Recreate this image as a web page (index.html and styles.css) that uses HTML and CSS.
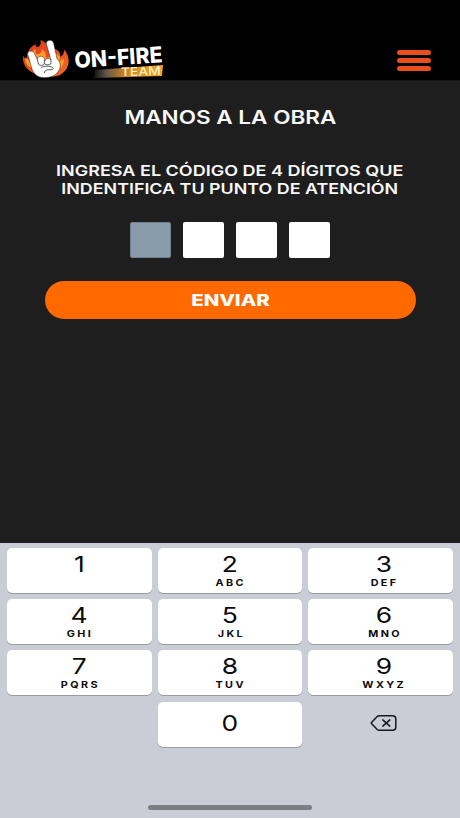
FILE: index.html
```html
<!DOCTYPE html>
<html lang="es">
<head>
<meta charset="utf-8">
<meta name="viewport" content="width=device-width, initial-scale=1">
<title>On-Fire Team</title>
<link rel="stylesheet" href="styles.css">
</head>
<body>
<header class="topbar">
  <svg class="logo" viewBox="0 0 146 46" role="img" aria-label="On-Fire Team">
    <defs>
      <linearGradient id="band" x1="0" x2="1" y1="0" y2="0">
        <stop offset="0" stop-color="#111"/>
        <stop offset=".18" stop-color="#64564d"/>
        <stop offset=".45" stop-color="#cf8420"/>
        <stop offset="1" stop-color="#f6a71c"/>
      </linearGradient>
      <linearGradient id="fire" x1="0" x2="1" y1="0" y2="1">
        <stop offset="0" stop-color="#d9371b"/>
        <stop offset="1" stop-color="#f46a25"/>
      </linearGradient>
    </defs>
    <g transform="translate(0 2) scale(.3333)">
      <path fill="url(#fire)" d="M38 106C14 97 1 79 3 53c4 7 7 10 11 12 0-25 11-39 27-46 0 7 4 10 9 7 8-7 8-13 4-19 17 4 29 15 27 31l20-5c11 6 15 14 14 24l9-8 3-14c22 27 15 60-12 75-20 9-51 9-77-4z"/>
      <path fill="#ff9a2c" d="M24 88C12 80 8 66 10 58l13 12c-1-20 7-31 18-37-3 12 2 18 10 15 7-4 9-9 8-16 10 7 14 16 12 29l34-14 9 9-2 14 14-8c0 20-10 32-24 38z"/>
      <path fill="#fff" stroke="#171717" stroke-width="1.5" stroke-linejoin="round" d="M17 49c-2-11 17-14 20-3l9 19c0-11 17-14 21-3l2 6c3-8 14-9 18-2L73 18c-2-13 18-16 22-3l10 47c9 8 12 19 8 30-7 19-25 27-46 27-22 0-35-14-39-33z"/>
      <path fill="none" stroke="#444" stroke-width="2.6" stroke-linecap="round" d="M46 66l4 13c4 5 14 4 17-1V67M68 78c5 4 14 3 19-1V66M58 88c9-4 21-5 31-1 8 3 6 8-2 8l-11 1c-6 2-9 4-9 8"/>
    </g>
    <path fill="url(#band)" d="M73 34l68-5-1 11-68 2z"/>
    <text class="brand" transform="translate(53 32) rotate(-3.8)" textLength="88" lengthAdjust="spacingAndGlyphs">ON-FIRE</text>
    <text class="brand-team" transform="translate(99 40.3) rotate(-2)" textLength="40" lengthAdjust="spacingAndGlyphs">TEAM</text>
  </svg>
  <button class="menu" aria-label="Menú"><i></i><i></i><i></i></button>
</header>
<main class="content">
  <h1 class="title"><span class="wide">MANOS A LA OBRA</span></h1>
  <p class="hint"><span class="wide">INGRESA EL CÓDIGO DE 4 DÍGITOS QUE</span><span class="wide second">INDENTIFICA TU PUNTO DE ATENCIÓN</span></p>
  <div class="code"><span class="cell active"></span><span class="cell"></span><span class="cell"></span><span class="cell"></span></div>
  <button class="send"><span class="wide">ENVIAR</span></button>
</main>
<section class="keyboard">
  <div class="keys">
    <div class="key"><b>1</b></div>
    <div class="key"><b>2</b><small>ABC</small></div>
    <div class="key right"><b>3</b><small>DEF</small></div>
    <div class="key"><b>4</b><small>GHI</small></div>
    <div class="key"><b>5</b><small>JKL</small></div>
    <div class="key right"><b>6</b><small>MNO</small></div>
    <div class="key"><b>7</b><small>PQRS</small></div>
    <div class="key"><b>8</b><small>TUV</small></div>
    <div class="key right"><b>9</b><small>WXYZ</small></div>
    <div></div>
    <div class="key zero"><b>0</b></div>
    <div class="erase">
      <svg width="28" height="18" viewBox="0 0 28 18" fill="none" stroke="#17181b" stroke-width="1.5" stroke-linecap="round" stroke-linejoin="round"><path d="M9.2 1.7h13.3q3.3 0 3.3 3v8.6q0 3-3.3 3H9.2q-1 0-2-.8L1.7 9.8q-.8-.8 0-1.6l5.5-5.7q1-.8 2-.8zM12.8 5.9l7 6.2m0-6.2l-7 6.2"/></svg>
    </div>
  </div>
  <div class="home"></div>
</section>
</body>
</html>
```
FILE: styles.css
```css
* { box-sizing: border-box; }
body {
  margin: 0;
  width: 460px;
  height: 818px;
  display: flex;
  flex-direction: column;
  overflow: hidden;
  background: #1e1e1e;
  font-family: Inter, "Liberation Sans", sans-serif;
}
button { border: 0; padding: 0; font: inherit; }
.topbar {
  height: 81px;
  padding: 36px 29px 0 22px;
  display: flex;
  justify-content: space-between;
  align-items: flex-start;
  background: #000;
  border-bottom: 1px solid #151515;
}
.logo { width: 146px; height: 46px; overflow: visible; }
.brand { font: 800 22px Inter, sans-serif; fill: #fff; }
.brand-team { font: 500 12px Inter, sans-serif; fill: #fff0c8; }
.menu {
  width: 34px;
  margin-top: 14px;
  display: flex;
  flex-direction: column;
  gap: 3px;
  background: none;
}
.menu i { height: 5px; border-radius: 2.5px; background: #e94e1b; }
.content {
  height: 462px;
  display: flex;
  flex-direction: column;
  align-items: center;
  color: #f7f7f7;
}
.wide { display: block; white-space: nowrap; transform: scaleX(1.2); }
.title { margin: 25px 0 0; font-size: 19px; font-weight: 600; line-height: 24px; }
.title .wide { transform: scaleX(1.185); }
.hint {
  margin: 32px 0 0;
  font-size: 15px;
  font-weight: 600;
  line-height: 17.5px;
  text-align: center;
}
.hint .second { transform: scaleX(1.192); }
.code { display: flex; gap: 12px; margin-top: 25px; }
.cell { width: 41px; height: 36px; border-radius: 2px; background: #fff; }
.active { background: #889cab; border: 1px solid #73828e; }
.send {
  width: 371px;
  height: 38px;
  margin-top: 23px;
  border-radius: 19px;
  background: #ff6900;
  color: #fff;
  font-size: 16px;
  font-weight: 800;
}
.send .wide { transform: scaleX(1.27); }
.keyboard {
  height: 275px;
  padding: 5px 7px 0;
  display: flex;
  flex-direction: column;
  background: #cacdd6;
}
.keys {
  display: grid;
  grid-template-columns: repeat(3, 1fr);
  grid-auto-rows: 45px;
  gap: 6.2px;
}
.key {
  padding-top: 4px;
  display: flex;
  flex-direction: column;
  align-items: center;
  background: #fff;
  border-radius: 5px;
  box-shadow: 0 1px 0 #999ba1;
  color: #0c0c0d;
}
.right { padding-left: 6px; }
.key b { font-size: 22px; font-weight: 400; line-height: 24px; transform: scaleX(1.2); }
.key small {
  font-size: 9px;
  font-weight: 700;
  line-height: 13px;
  letter-spacing: 2px;
  margin-right: -2px;
  transform: scaleX(1.2);
}
.zero { padding-top: 9px; }
.erase { display: flex; justify-content: center; padding-top: 12px; margin-left: 6px; }
.home {
  width: 164px;
  height: 5px;
  margin: 58px auto 0;
  border-radius: 3px;
  background: #7c7e84;
}
```
